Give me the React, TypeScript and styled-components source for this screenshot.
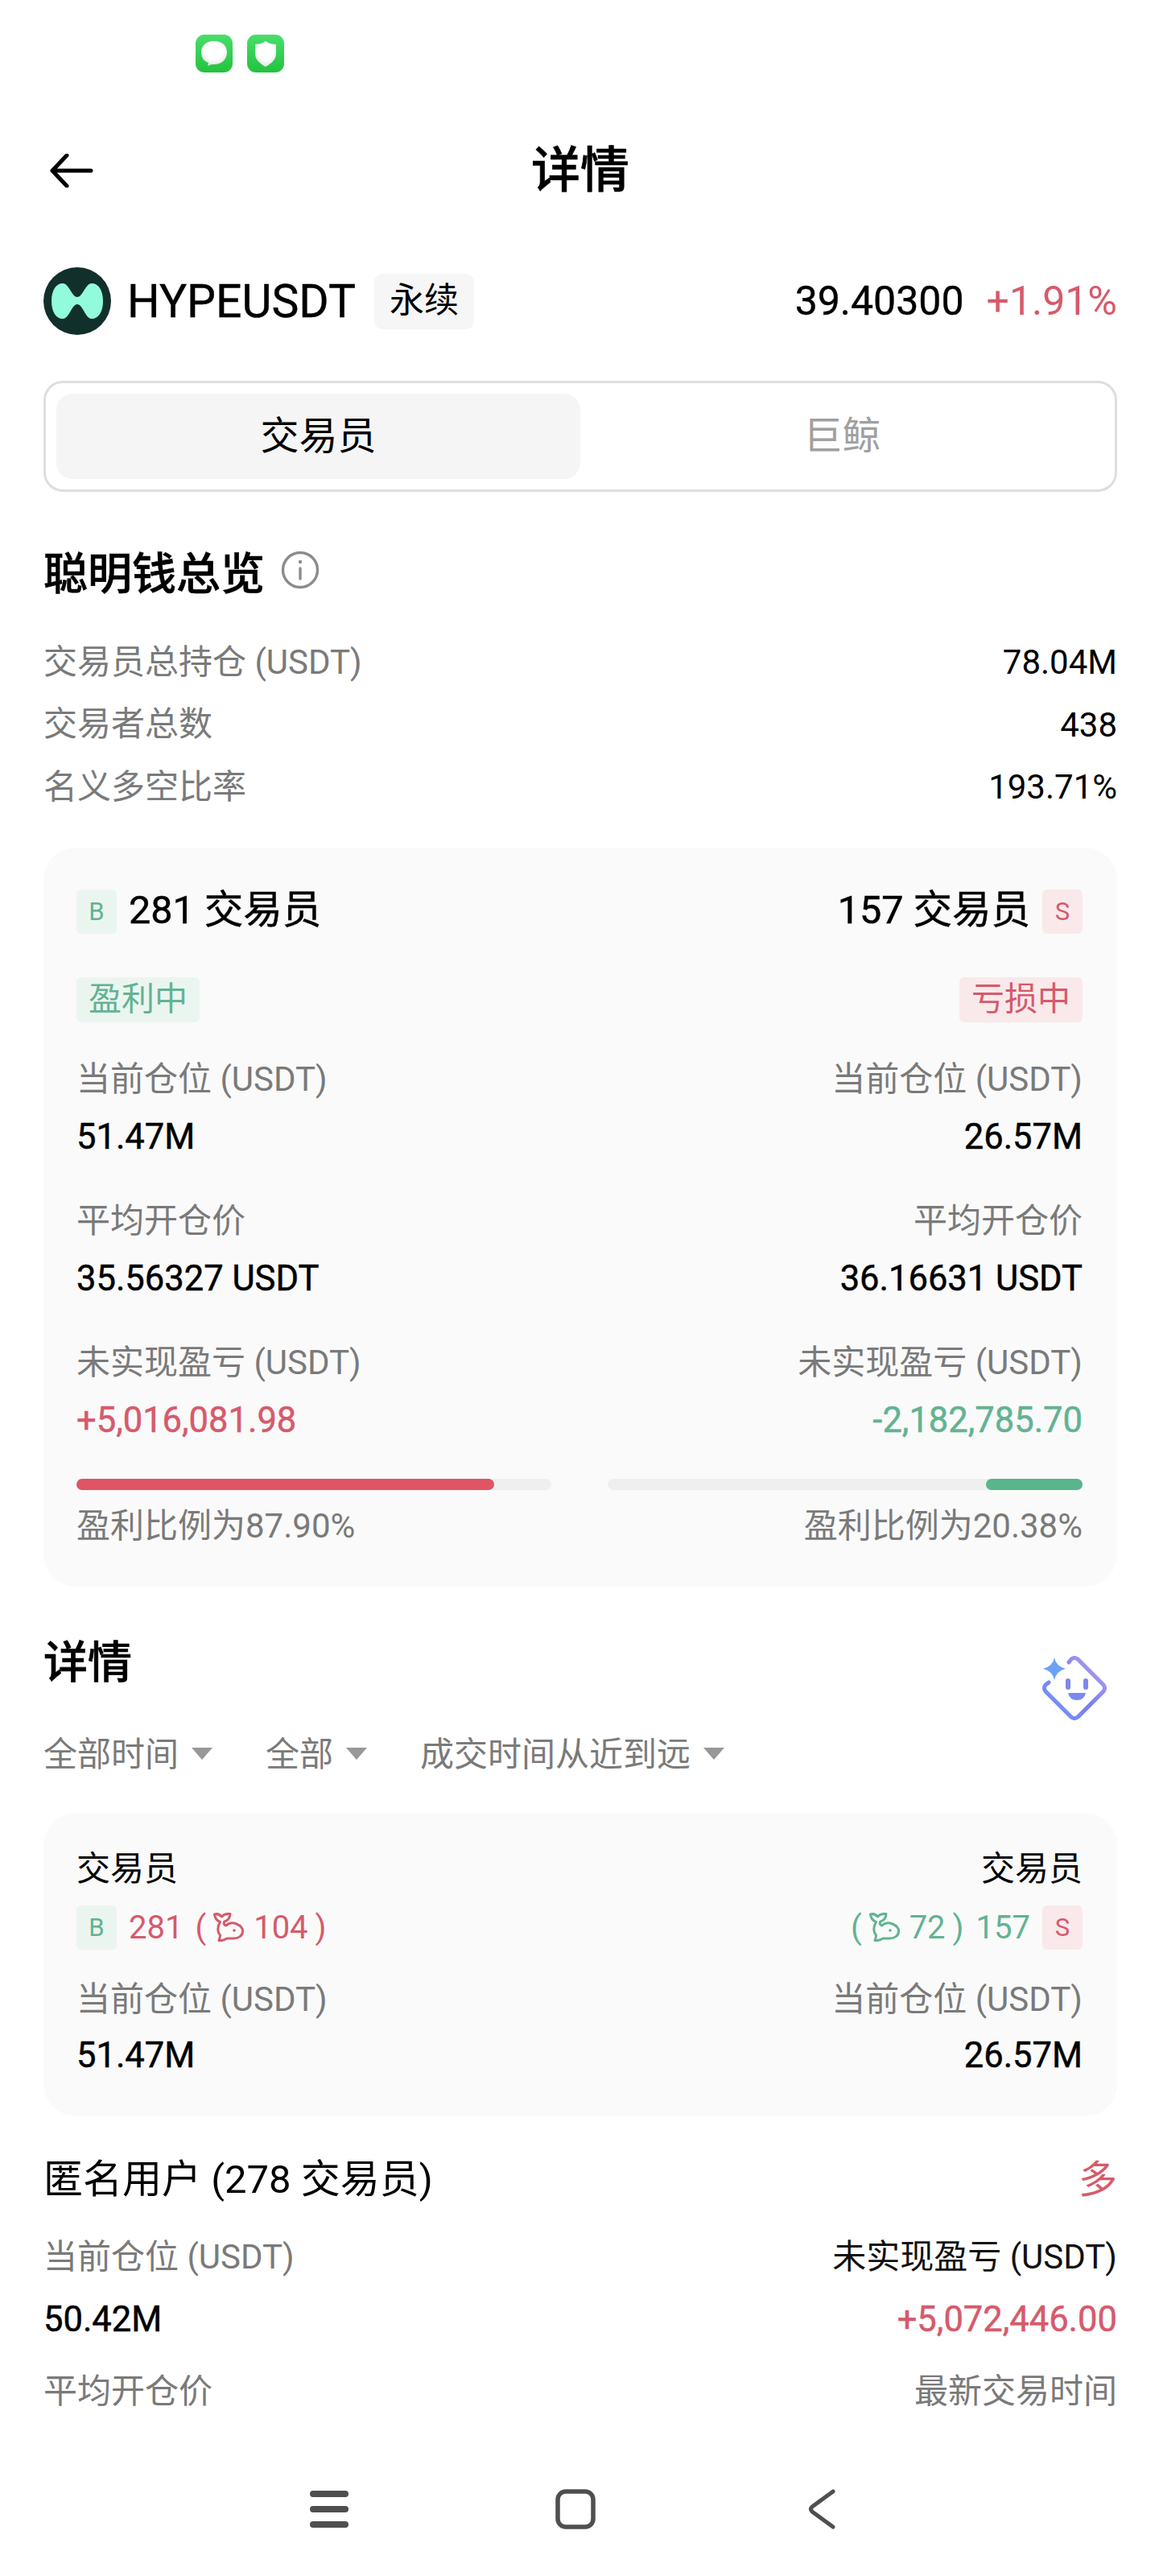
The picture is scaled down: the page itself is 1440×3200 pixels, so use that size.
import styled, { createGlobalStyle } from 'styled-components';

const red = '#d65a6b';
const barRed = '#e05563';
const green = '#62b391';
const barGreen = '#5ab48d';
const gray = '#7a7a7a';

const GlobalStyle = createGlobalStyle`
    html, body {
        margin: 0;
        padding: 0;
        background: #fff;
    }
    * {
        box-sizing: border-box;
    }
`;

const Page = styled.div`
    height: 3200px;
    padding: 0 52px 0 54px;
    display: flex;
    flex-direction: column;
    font-family: Roboto, "Noto Sans CJK SC", sans-serif;
    color: #000;
    background: #fff;
`;

const StatusIcons = styled.div`
    display: flex;
    gap: 18px;
    padding: 43px 0 0 189px;
`;

const Header = styled.div`
    display: grid;
    grid-template-columns: 1fr auto 1fr;
    align-items: center;
    height: 120px;
    margin-top: 62px;
`;

const BackButton = styled.div`
    display: flex;
    padding-left: 8px;
`;

const Title = styled.h1`
    margin: 0;
    font-size: 61px;
    line-height: 70px;
    font-weight: 500;
    -webkit-text-stroke: 0.6px #000;
`;

const Ticker = styled.div`
    display: flex;
    align-items: center;
    height: 84px;
    margin-top: 60px;
`;

const Symbol = styled.div`
    margin-left: 20px;
    font-size: 57px;
    font-weight: 400;
    -webkit-text-stroke: 0.4px #000;
`;

const Perp = styled.div`
    margin-left: 23px;
    padding: 0 19px;
    height: 69px;
    line-height: 66px;
    font-size: 43px;
    background: #f6f6f6;
    border-radius: 10px;
`;

const Price = styled.div`
    margin-left: auto;
    font-size: 50px;
    -webkit-text-stroke: 0.4px #000;
`;

const Change = styled.div`
    margin-left: 28px;
    font-size: 50px;
    color: ${red};
`;

const Tabs = styled.div`
    display: flex;
    height: 138px;
    margin-top: 57px;
    padding: 13px;
    border: 3px solid #dedede;
    border-radius: 24px;
`;

const Tab = styled.div<{ $active?: boolean }>`
    flex: 1;
    display: flex;
    align-items: center;
    justify-content: center;
    padding-bottom: 10px;
    font-size: 48px;
    border-radius: 20px;
    color: ${props => (props.$active ? '#000' : '#a0a0a0')};
    background: ${props => (props.$active ? '#f5f5f5' : 'transparent')};
`;

const SectionTitle = styled.div`
    display: flex;
    align-items: center;
    gap: 20px;
    margin-top: 67px;
    height: 60px;
    font-size: 55px;
    font-weight: 500;
    -webkit-text-stroke: 0.6px #000;
`;

const SummaryList = styled.div`
    margin-top: 46px;
`;

const SummaryRow = styled.div`
    display: flex;
    justify-content: space-between;
    align-items: center;
    height: 77.5px;
    font-size: 42px;
`;

const Label = styled.div`
    height: 60px;
    line-height: 60px;
    font-size: 42px;
    color: ${gray};
`;

const Card = styled.div<{ $top: number; $margin: number; $bottom: number }>`
    margin-top: ${props => props.$margin}px;
    padding: ${props => props.$top}px 43px ${props => props.$bottom}px 41px;
    background: #fafafa;
    border-radius: 40px;
`;

const Split = styled.div<{ $gap?: number }>`
    display: flex;
    justify-content: space-between;
    align-items: center;
    margin-top: ${props => props.$gap ?? 0}px;
`;

const Side = styled.div<{ $right?: boolean }>`
    display: flex;
    align-items: center;
    gap: 15px;
    height: 55px;
    color: #000;
    ${props => props.$right && 'justify-content: flex-end;'}
`;

const TraderTotal = styled.div`
    padding-bottom: 12px;
    font-size: 48.5px;
    -webkit-text-stroke: 0.5px #000;
`;

const LetterBadge = styled.div<{ $kind: 'buy' | 'sell' }>`
    width: 50px;
    height: 55px;
    display: flex;
    align-items: center;
    justify-content: center;
    font-size: 31px;
    border-radius: 6px;
    color: ${props => (props.$kind === 'buy' ? green : red)};
    background: ${props => (props.$kind === 'buy' ? '#ebf5f0' : '#f9e9eb')};
`;

const StateTag = styled.div<{ $kind: 'buy' | 'sell' }>`
    height: 56px;
    padding: 0 15px;
    line-height: 54px;
    font-size: 41px;
    border-radius: 6px;
    color: ${props => (props.$kind === 'buy' ? green : red)};
    background: ${props => (props.$kind === 'buy' ? '#ebf5f0' : '#f9e9eb')};
`;

const MetricGrid = styled.div<{ $gap: number }>`
    display: grid;
    grid-template-columns: 1fr 1fr;
    margin-top: ${props => props.$gap}px;
`;

const Metric = styled.div<{ $right?: boolean }>`
    display: flex;
    flex-direction: column;
    align-items: ${props => (props.$right ? 'flex-end' : 'flex-start')};
`;

const Value = styled.div<{ $color?: string; $gap?: number }>`
    margin-top: ${props => props.$gap ?? 17}px;
    height: 50px;
    line-height: 50px;
    font-size: 43.5px;
    font-weight: 400;
    -webkit-text-stroke: 0.5px ${props => props.$color ?? '#000'};
    color: ${props => props.$color ?? '#000'};
`;

const BarGrid = styled.div`
    display: grid;
    grid-template-columns: 590px 590px;
    justify-content: space-between;
    margin-top: 47px;
`;

const BarTrack = styled.div<{ $right?: boolean }>`
    height: 14px;
    display: flex;
    justify-content: ${props => (props.$right ? 'flex-end' : 'flex-start')};
    background: #efefef;
    border-radius: 7px;
`;

const BarFill = styled.div<{ $color: string }>`
    height: 100%;
    background: ${props => props.$color};
    border-radius: 7px;
`;

const RatioRow = styled.div`
    display: flex;
    justify-content: space-between;
    margin-top: 15px;
`;

const DetailsHead = styled.div`
    position: relative;
    height: 60px;
    margin-top: 64px;
    line-height: 60px;
    font-size: 55px;
    font-weight: 500;
    -webkit-text-stroke: 0.6px #000;
`;

const AssistantIcon = styled.div`
    position: absolute;
    right: 13px;
    top: 22px;
    display: flex;
`;

const Filters = styled.div`
    display: flex;
    gap: 66px;
    margin-top: 51px;
`;

const Filter = styled.div`
    display: flex;
    align-items: center;
    gap: 16px;
    height: 60px;
    font-size: 42px;
    color: ${gray};
`;

const Caret = styled.span`
    width: 0;
    height: 0;
    margin-top: 6px;
    border-left: 13px solid transparent;
    border-right: 13px solid transparent;
    border-top: 15px solid #989898;
`;

const CardLabel = styled.div`
    height: 50px;
    line-height: 50px;
    font-size: 42px;
`;

const Count = styled.div<{ $color: string }>`
    display: flex;
    align-items: center;
    font-size: 40px;
    color: ${props => props.$color};
`;

const Paren = styled.span<{ $left?: number; $right?: number }>`
    margin-left: ${props => props.$left ?? 0}px;
    margin-right: ${props => props.$right ?? 0}px;
`;

const UserRow = styled.div`
    display: flex;
    justify-content: space-between;
    align-items: center;
    height: 60px;
    margin-top: 44px;
    font-size: 49px;
`;

const SideText = styled.span`
    font-size: 48px;
    color: ${red};
`;

const InfoRow = styled.div<{ $gap: number }>`
    display: flex;
    justify-content: space-between;
    align-items: center;
    margin-top: ${props => props.$gap}px;
`;

const DarkLabel = styled(Label)`
    color: #111;
`;

const NavBar = styled.div`
    display: grid;
    grid-template-columns: repeat(3, 306px);
    justify-content: center;
    justify-items: center;
    align-items: center;
    margin-top: auto;
    margin-right: 12px;
    padding-bottom: 58px;
`;

const WhaleIcon = ({ color }: { color: string }) => (
    <svg width="38" height="36" viewBox="0 0 38 36" fill="none" stroke={color} strokeWidth="3" strokeLinejoin="round" strokeLinecap="round">
        <path d="M1.5 2 C5 1 8 2 10.5 5 C13 2 16 1 21 1.5 C21 6 18 10 14 11 C12.5 13 13 15 15.5 16 C19 13 24 12 29 14 C34 16 37 20 36.5 24 C36 29 31 32 25 32 L17 32 C14 34 11 35 7 34.5 C8 32 8.5 30 8.5 28 C5 24 5 18 8.5 11.5 C4 10 2 6 1.5 2 Z" />
        <circle cx="26" cy="22" r="1.8" fill={color} stroke="none" />
    </svg>
);

const GreenAppIcon = ({ kind }: { kind: 'chat' | 'shield' }) => (
    <svg width="46" height="47" viewBox="0 0 46 47">
        <defs>
            <linearGradient id={`g-${kind}`} x1="0" y1="0" x2="0" y2="1">
                <stop offset="0" stopColor="#4ade6a" />
                <stop offset="1" stopColor="#22c23f" />
            </linearGradient>
            <radialGradient id={`w-${kind}`} cx="0.5" cy="0.4" r="0.7">
                <stop offset="0.5" stopColor="#ffffff" />
                <stop offset="1" stopColor="#cfd6cf" />
            </radialGradient>
        </defs>
        <rect width="46" height="47" rx="11" fill={`url(#g-${kind})`} />
        {kind === 'chat' ? (
            <path d="M23 8 C32 8 39 13 39 22 C39 31 32 37 23 37 L20 37 L15 39 L16 35 C10 33 7 28 7 22 C7 13 14 8 23 8 Z" fill={`url(#w-${kind})`} />
        ) : (
            <path d="M23 8 C27 11 31 12 36 12 L36 24 C36 31 30 36 23 40 C16 36 10 31 10 24 L10 12 C15 12 19 11 23 8 Z" fill={`url(#w-${kind})`} />
        )}
    </svg>
);

const App = () => (
    <>
        <GlobalStyle />
        <Page>
            <StatusIcons>
                <GreenAppIcon kind="chat" />
                <GreenAppIcon kind="shield" />
            </StatusIcons>

            <Header>
                <BackButton>
                    <svg width="54" height="42" viewBox="0 0 54 42" fill="none" stroke="#000" strokeWidth="5" strokeLinecap="round" strokeLinejoin="round">
                        <path d="M51 21 H3 M21 2 L3 21 L21 40" />
                    </svg>
                </BackButton>
                <Title>详情</Title>
                <div />
            </Header>

            <Ticker>
                <svg width="84" height="84" viewBox="0 0 84 84">
                    <circle cx="42" cy="42" r="42" fill="#12302b" />
                    <path d="M10 42 C10 28 16 20 24 20 C32 20 35 37 42 37 C49 37 52 20 60 20 C68 20 74 28 74 42 C74 56 68 64 60 64 C52 64 49 46 42 46 C35 46 32 64 24 64 C16 64 10 56 10 42 Z" fill="#92fbdc" />
                </svg>
                <Symbol>HYPEUSDT</Symbol>
                <Perp>永续</Perp>
                <Price>39.40300</Price>
                <Change>+1.91%</Change>
            </Ticker>

            <Tabs>
                <Tab $active>交易员</Tab>
                <Tab>巨鲸</Tab>
            </Tabs>

            <SectionTitle>
                聪明钱总览
                <svg width="48" height="48" viewBox="0 0 48 48" fill="none" stroke="#8c8c8c" strokeWidth="3.4" strokeLinecap="round">
                    <circle cx="24" cy="24" r="21.5" />
                    <path d="M24 22 V35" />
                    <circle cx="24" cy="14" r="2.2" fill="#8c8c8c" stroke="none" />
                </svg>
            </SectionTitle>

            <SummaryList>
                <SummaryRow><Label>交易员总持仓 (USDT)</Label>78.04M</SummaryRow>
                <SummaryRow><Label>交易者总数</Label>438</SummaryRow>
                <SummaryRow><Label>名义多空比率</Label>193.71%</SummaryRow>
            </SummaryList>

            <Card $top={52} $margin={36} $bottom={45}>
                <Split>
                    <Side><LetterBadge $kind="buy">B</LetterBadge><TraderTotal>281 交易员</TraderTotal></Side>
                    <Side $right><TraderTotal>157 交易员</TraderTotal><LetterBadge $kind="sell">S</LetterBadge></Side>
                </Split>
                <Split $gap={54}>
                    <StateTag $kind="buy">盈利中</StateTag>
                    <StateTag $kind="sell">亏损中</StateTag>
                </Split>
                <MetricGrid $gap={41}>
                    <Metric><Label>当前仓位 (USDT)</Label><Value>51.47M</Value></Metric>
                    <Metric $right><Label>当前仓位 (USDT)</Label><Value>26.57M</Value></Metric>
                </MetricGrid>
                <MetricGrid $gap={49}>
                    <Metric><Label>平均开仓价</Label><Value>35.56327 USDT</Value></Metric>
                    <Metric $right><Label>平均开仓价</Label><Value>36.16631 USDT</Value></Metric>
                </MetricGrid>
                <MetricGrid $gap={49}>
                    <Metric><Label>未实现盈亏 (USDT)</Label><Value $color={red}>+5,016,081.98</Value></Metric>
                    <Metric $right><Label>未实现盈亏 (USDT)</Label><Value $color={green}>-2,182,785.70</Value></Metric>
                </MetricGrid>
                <BarGrid>
                    <BarTrack><BarFill $color={barRed} style={{ width: '87.9%' }} /></BarTrack>
                    <BarTrack $right><BarFill $color={barGreen} style={{ width: '20.38%' }} /></BarTrack>
                </BarGrid>
                <RatioRow>
                    <Label>盈利比例为87.90%</Label>
                    <Label>盈利比例为20.38%</Label>
                </RatioRow>
            </Card>

            <DetailsHead>
                详情
                <AssistantIcon>
                    <svg width="80" height="80" viewBox="0 0 80 80" fill="none">
                        <defs>
                            <linearGradient id="assistant" x1="0" y1="1" x2="1" y2="0">
                                <stop offset="0" stopColor="#6f9cf5" />
                                <stop offset="0.5" stopColor="#7a7df0" />
                                <stop offset="1" stopColor="#b9a6ee" />
                            </linearGradient>
                        </defs>
                        <path d="M33 8 L36 4 Q40 1 44 4 L76 36 Q79 40 76 44 L44 76 Q40 79 36 76 L4 44 Q1 40 4 36 L8 33" stroke="url(#assistant)" strokeWidth="5" strokeLinecap="round" />
                        <path d="M15 2 Q17 13 29 16 Q17 19 15 30 Q13 19 1 16 Q13 13 15 2 Z" fill="#6ba2f8" />
                        <rect x="29" y="28" width="6" height="14" rx="3" fill="#7d88ee" />
                        <rect x="51" y="28" width="6" height="14" rx="3" fill="#7d88ee" />
                        <path d="M32 46 H54 Q52 55 43 55 Q34 55 32 46 Z" fill="#7d88ee" />
                    </svg>
                </AssistantIcon>
            </DetailsHead>

            <Filters>
                <Filter>全部时间<Caret /></Filter>
                <Filter>全部<Caret /></Filter>
                <Filter>成交时间从近到远<Caret /></Filter>
            </Filters>

            <Card $top={45} $margin={46} $bottom={50}>
                <Split>
                    <CardLabel>交易员</CardLabel>
                    <CardLabel>交易员</CardLabel>
                </Split>
                <Split $gap={20}>
                    <Side>
                        <LetterBadge $kind="buy">B</LetterBadge>
                        <Count $color={red}>
                            281
                            <Paren $left={15} $right={9}>(</Paren>
                            <WhaleIcon color={red} />
                            <Paren $left={12}>104</Paren>
                            <Paren $left={9}>)</Paren>
                        </Count>
                    </Side>
                    <Side $right>
                        <Count $color={green}>
                            <Paren $right={9}>(</Paren>
                            <WhaleIcon color={green} />
                            <Paren $left={12}>72</Paren>
                            <Paren $left={9} $right={15}>)</Paren>
                            157
                        </Count>
                        <LetterBadge $kind="sell">S</LetterBadge>
                    </Side>
                </Split>
                <MetricGrid $gap={32}>
                    <Metric><Label>当前仓位 (USDT)</Label><Value $gap={15}>51.47M</Value></Metric>
                    <Metric $right><Label>当前仓位 (USDT)</Label><Value $gap={15}>26.57M</Value></Metric>
                </MetricGrid>
            </Card>

            <UserRow>
                匿名用户 (278 交易员)
                <SideText>多</SideText>
            </UserRow>
            <InfoRow $gap={41}>
                <Label>当前仓位 (USDT)</Label>
                <DarkLabel>未实现盈亏 (USDT)</DarkLabel>
            </InfoRow>
            <InfoRow $gap={23}>
                <Value $gap={0}>50.42M</Value>
                <Value $gap={0} $color={red}>+5,072,446.00</Value>
            </InfoRow>
            <InfoRow $gap={34}>
                <Label>平均开仓价</Label>
                <Label>最新交易时间</Label>
            </InfoRow>

            <NavBar>
                <svg width="48" height="46" viewBox="0 0 48 46" fill="#4f4f4f">
                    <rect y="0" width="48" height="8" rx="4" />
                    <rect y="19" width="48" height="8" rx="4" />
                    <rect y="38" width="48" height="8" rx="4" />
                </svg>
                <svg width="50" height="50" viewBox="0 0 50 50" fill="none" stroke="#4f4f4f" strokeWidth="5.5">
                    <rect x="3" y="3" width="44" height="44" rx="10" />
                </svg>
                <svg width="34" height="50" viewBox="0 0 34 50" fill="none" stroke="#4f4f4f" strokeWidth="5" strokeLinecap="round" strokeLinejoin="round">
                    <path d="M31 3 L5 22 Q2 25 5 28 L31 47" />
                </svg>
            </NavBar>
        </Page>
    </>
);

export default App;
